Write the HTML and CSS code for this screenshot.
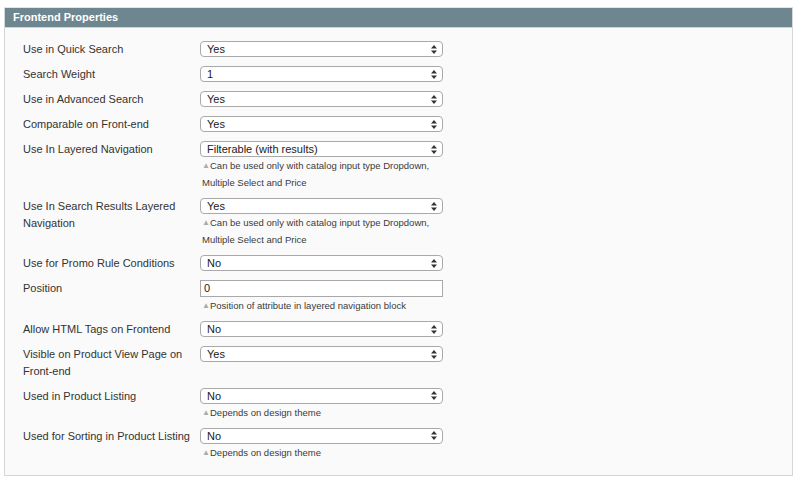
FILE: index.html
```html
<!DOCTYPE html>
<html>
<head>
<meta charset="utf-8">
<link rel="stylesheet" href="styles.css">
</head>
<body>
<div class="panel">
  <div class="panel-head">Frontend Properties</div>
  <div class="panel-body">
    <div class="row">
      <div class="label">Use in Quick Search</div>
      <div class="value"><div class="sel"><span>Yes</span><svg class="arr" width="6" height="9" viewBox="0 0 6 9"><path d="M0 3.5 L3 0 L6 3.5Z M0 5.5 L3 9 L6 5.5Z" fill="#333"/></svg></div></div>
    </div>
    <div class="row">
      <div class="label">Search Weight</div>
      <div class="value"><div class="sel"><span>1</span><svg class="arr" width="6" height="9" viewBox="0 0 6 9"><path d="M0 3.5 L3 0 L6 3.5Z M0 5.5 L3 9 L6 5.5Z" fill="#333"/></svg></div></div>
    </div>
    <div class="row">
      <div class="label">Use in Advanced Search</div>
      <div class="value"><div class="sel"><span>Yes</span><svg class="arr" width="6" height="9" viewBox="0 0 6 9"><path d="M0 3.5 L3 0 L6 3.5Z M0 5.5 L3 9 L6 5.5Z" fill="#333"/></svg></div></div>
    </div>
    <div class="row">
      <div class="label">Comparable on Front-end</div>
      <div class="value"><div class="sel"><span>Yes</span><svg class="arr" width="6" height="9" viewBox="0 0 6 9"><path d="M0 3.5 L3 0 L6 3.5Z M0 5.5 L3 9 L6 5.5Z" fill="#333"/></svg></div></div>
    </div>
    <div class="row note-row">
      <div class="label">Use In Layered Navigation</div>
      <div class="value"><div class="sel"><span>Filterable (with results)</span><svg class="arr" width="6" height="9" viewBox="0 0 6 9"><path d="M0 3.5 L3 0 L6 3.5Z M0 5.5 L3 9 L6 5.5Z" fill="#333"/></svg></div>
        <div class="note"><span class="tri">&#9650;</span>Can be used only with catalog input type Dropdown,<br>Multiple Select and Price</div></div>
    </div>
    <div class="row note-row">
      <div class="label">Use In Search Results Layered Navigation</div>
      <div class="value"><div class="sel"><span>Yes</span><svg class="arr" width="6" height="9" viewBox="0 0 6 9"><path d="M0 3.5 L3 0 L6 3.5Z M0 5.5 L3 9 L6 5.5Z" fill="#333"/></svg></div>
        <div class="note"><span class="tri">&#9650;</span>Can be used only with catalog input type Dropdown,<br>Multiple Select and Price</div></div>
    </div>
    <div class="row">
      <div class="label">Use for Promo Rule Conditions</div>
      <div class="value"><div class="sel"><span>No</span><svg class="arr" width="6" height="9" viewBox="0 0 6 9"><path d="M0 3.5 L3 0 L6 3.5Z M0 5.5 L3 9 L6 5.5Z" fill="#333"/></svg></div></div>
    </div>
    <div class="row note-row">
      <div class="label">Position</div>
      <div class="value"><div class="inp">0</div>
        <div class="note"><span class="tri">&#9650;</span>Position of attribute in layered navigation block</div></div>
    </div>
    <div class="row">
      <div class="label">Allow HTML Tags on Frontend</div>
      <div class="value"><div class="sel"><span>No</span><svg class="arr" width="6" height="9" viewBox="0 0 6 9"><path d="M0 3.5 L3 0 L6 3.5Z M0 5.5 L3 9 L6 5.5Z" fill="#333"/></svg></div></div>
    </div>
    <div class="row">
      <div class="label">Visible on Product View Page on Front-end</div>
      <div class="value"><div class="sel"><span>Yes</span><svg class="arr" width="6" height="9" viewBox="0 0 6 9"><path d="M0 3.5 L3 0 L6 3.5Z M0 5.5 L3 9 L6 5.5Z" fill="#333"/></svg></div></div>
    </div>
    <div class="row note-row">
      <div class="label">Used in Product Listing</div>
      <div class="value"><div class="sel"><span>No</span><svg class="arr" width="6" height="9" viewBox="0 0 6 9"><path d="M0 3.5 L3 0 L6 3.5Z M0 5.5 L3 9 L6 5.5Z" fill="#333"/></svg></div>
        <div class="note"><span class="tri">&#9650;</span>Depends on design theme</div></div>
    </div>
    <div class="row note-row last">
      <div class="label">Used for Sorting in Product Listing</div>
      <div class="value"><div class="sel"><span>No</span><svg class="arr" width="6" height="9" viewBox="0 0 6 9"><path d="M0 3.5 L3 0 L6 3.5Z M0 5.5 L3 9 L6 5.5Z" fill="#333"/></svg></div>
        <div class="note"><span class="tri">&#9650;</span>Depends on design theme</div></div>
    </div>
  </div>
</div>
</body>
</html>
```
FILE: styles.css
```css
html, body {
  margin: 0;
  padding: 0;
  background: #ffffff;
}
body {
  padding: 7px 7px 0 4px;
  font-family: "Liberation Sans", Arial, sans-serif;
  color: #333333;
}
.panel {
  width: 789px;
  border: 1px solid #d6d6d6;
  border-top: 1px solid #e4e4e4;
  background: #fafafa;
  box-sizing: border-box;
}
.panel-head {
  height: 19px;
  line-height: 19px;
  background: #6e868f;
  color: #ffffff;
  font-weight: bold;
  font-size: 11px;
  padding-left: 8px;
  border-bottom: 1px solid #d0d5d7;
}
.panel-body {
  padding: 13px 0 14px 18px;
}
.row {
  display: flex;
  align-items: flex-start;
  padding-bottom: 9px;
}
.row.note-row {
  padding-bottom: 7px;
}
.row.last {
  padding-bottom: 0;
}
.label {
  width: 172px;
  margin-right: 5px;
  margin-bottom: -0.5px;
  font-size: 11px;
  line-height: 16.5px;
  color: #333333;
}
.value {
  width: 243px;
}
.sel {
  height: 16px;
  box-sizing: border-box;
  border: 1px solid #a9a9a9;
  border-radius: 4px;
  background: #ffffff;
  display: flex;
  align-items: center;
  justify-content: space-between;
  padding: 0 5px 0 6px;
  font-size: 11px;
  color: #1a1a1a;
}
.sel span {
  line-height: 14px;
}
.arr {
  display: block;
}
.inp {
  height: 17px;
  box-sizing: border-box;
  border: 1px solid #a9a9a9;
  background: #ffffff;
  font-size: 11px;
  line-height: 15px;
  padding-left: 3px;
  color: #1a1a1a;
}
.note {
  font-size: 9.5px;
  line-height: 17px;
  color: #3a3a3a;
  padding-left: 2px;
}
.tri {
  font-size: 8px;
  line-height: 0;
  color: #a3aeb1;
  display: inline-block;
  width: 8px;
  vertical-align: 1px;
}
```
